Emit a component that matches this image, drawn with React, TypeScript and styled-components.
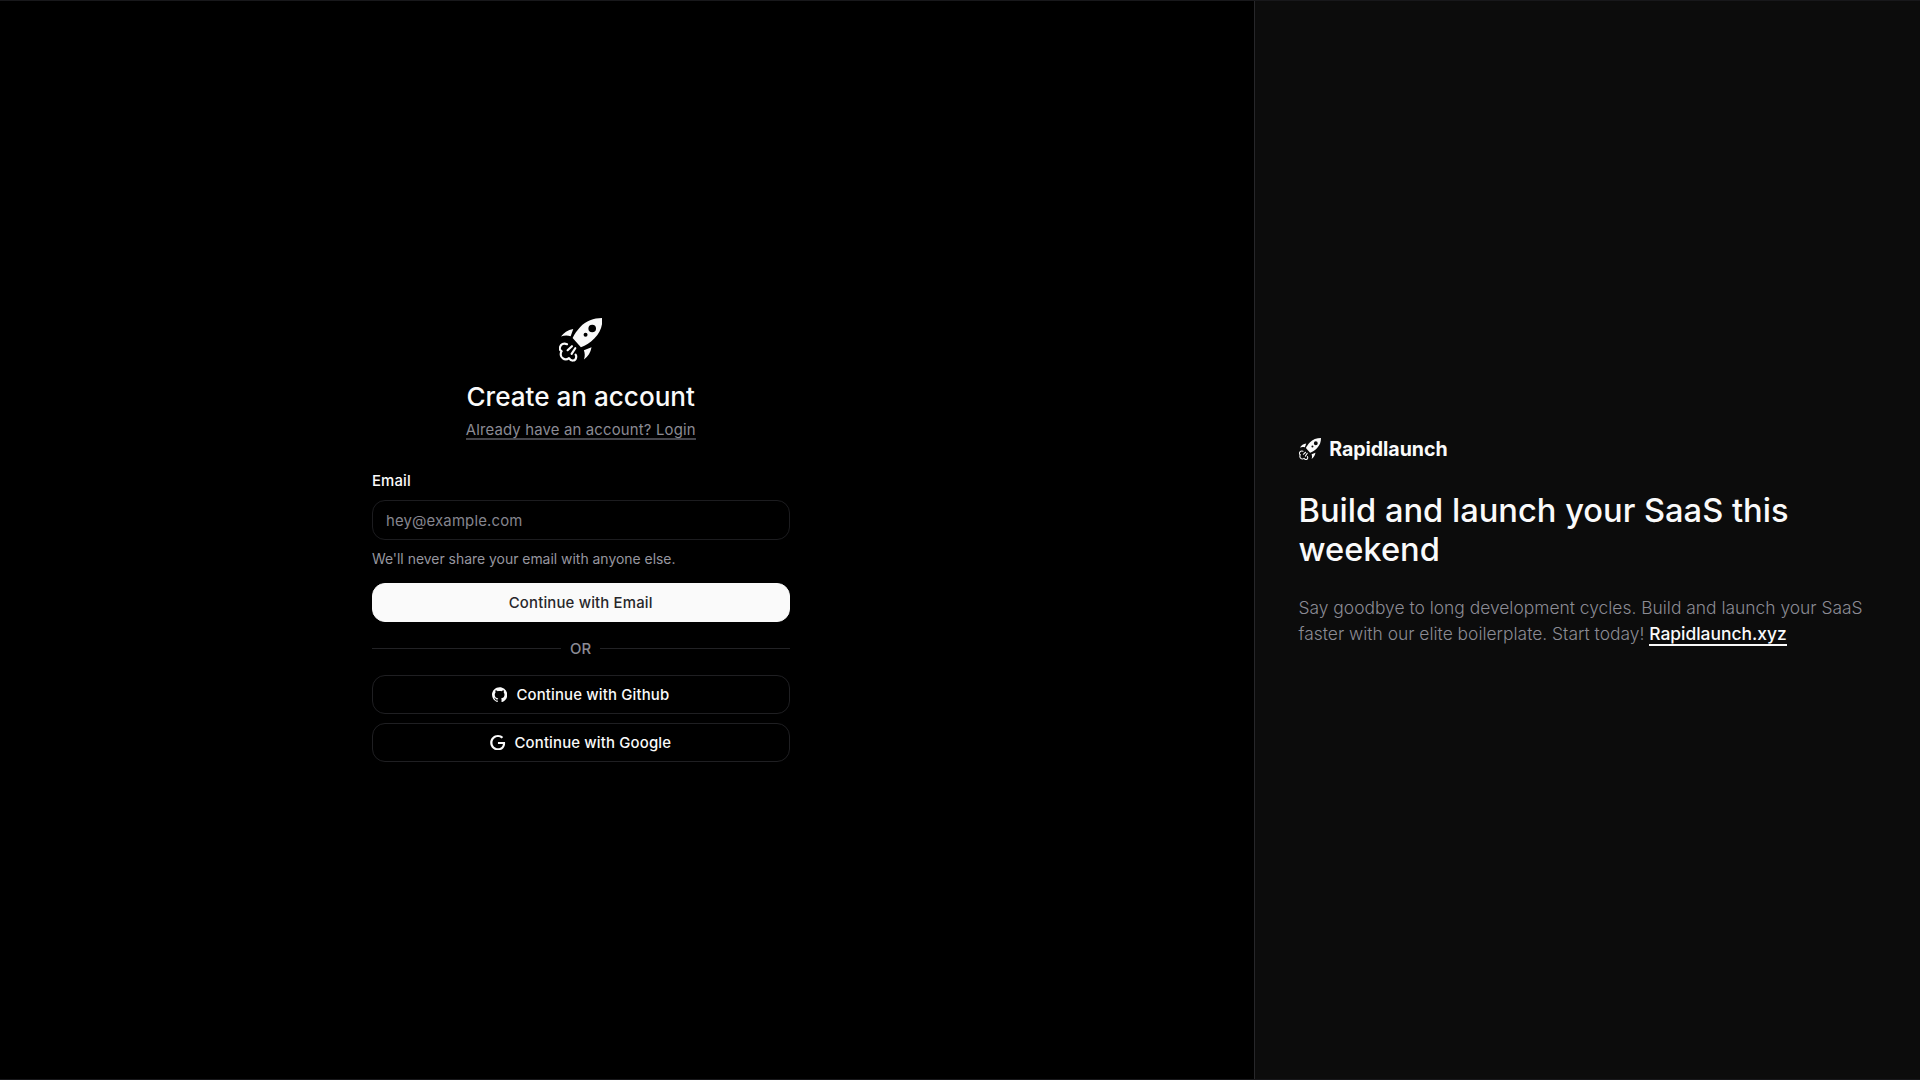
import React from "react";
import styled, { createGlobalStyle } from "styled-components";
import { SiGithub, SiGoogle } from "react-icons/si";

const GlobalStyle = createGlobalStyle`
  *, *::before, *::after { box-sizing: border-box; }
  body {
    margin: 0;
    background: #000;
    color: #fafafa;
    font-family: Inter, "Liberation Sans", sans-serif;
    font-size: 14.9px;
    letter-spacing: 0.17px;
  }
  h1, h2, p { margin: 0; }
`;

const Page = styled.main`
  display: grid;
  grid-template-columns: 1254px 1fr;
  height: 1080px;
  border-top: 1px solid #18181b;
  border-bottom: 1px solid #18181b;
`;

const FormSide = styled.section`
  display: flex;
  align-items: center;
  justify-content: center;
  padding-right: 92.6px;
`;

const FormColumn = styled.div`
  display: flex;
  flex-direction: column;
  width: 417.6px;
`;

const Header = styled.header`
  display: flex;
  flex-direction: column;
  align-items: center;
`;

const Title = styled.h1`
  margin-top: 18.4px;
  font-size: 26.1px;
  line-height: 34.8px;
  font-weight: 500;
  letter-spacing: 0;
`;

const LoginLink = styled.a`
  margin-top: 3px;
  height: 22px;
  line-height: 24px;
  color: #8b8b94;
  border-bottom: 2px solid #45454b;
`;

const Label = styled.label`
  margin-top: 33px;
  padding-top: 1px;
  line-height: 15px;
  font-weight: 500;
`;

const EmailInput = styled.input`
  margin-top: 11px;
  height: 40px;
  padding: 2px 13px 0;
  border: 1px solid #1c1c1f;
  border-radius: 13px;
  background: transparent;
  color: #fafafa;
  font: inherit;
  letter-spacing: inherit;
  outline: none;
  &::placeholder { color: #85858e; opacity: 1; }
`;

const Hint = styled.p`
  margin-top: 9px;
  font-size: 13.93px;
  line-height: 21px;
  letter-spacing: 0;
  color: #96969f;
`;

const Button = styled.button<{ $primary?: boolean }>`
  display: flex;
  align-items: center;
  justify-content: center;
  gap: 9px;
  width: 100%;
  height: 39px;
  padding: 0;
  border: 1px solid ${(p) => (p.$primary ? "#fafafa" : "#1f1f22")};
  border-radius: 13px;
  background: ${(p) => (p.$primary ? "#fafafa" : "transparent")};
  color: ${(p) => (p.$primary ? "#27272a" : "#fafafa")};
  font: inherit;
  font-weight: 500;
  letter-spacing: inherit;
`;

const Caption = styled.span`
  padding-top: 2px;
`;

const SubmitRow = styled.div`
  margin-top: 13px;
`;

const Divider = styled.div`
  display: flex;
  align-items: center;
  gap: 9px;
  margin: 16px 0;
  height: 21px;
  color: #8b8b94;
  font-weight: 500;
  &::before, &::after {
    content: "";
    flex: 1;
    height: 1px;
    background: #222225;
  }
`;

const Providers = styled.div`
  display: flex;
  flex-direction: column;
  gap: 9px;
`;

const PromoSide = styled.aside`
  display: flex;
  flex-direction: column;
  justify-content: center;
  padding: 0 43.5px;
  border-left: 1px solid #27272a;
  background: #0c0c0c;
  letter-spacing: 0;
`;

const Brand = styled.div`
  display: flex;
  align-items: center;
  gap: 8.7px;
  font-size: 19.59px;
  line-height: 30px;
  font-weight: 700;
  letter-spacing: -0.04px;
`;

const Headline = styled.h2`
  margin-top: 27px;
  font-size: 32.65px;
  line-height: 39.2px;
  font-weight: 500;
`;

const Pitch = styled.p`
  margin-top: 26px;
  margin-bottom: -1px;
  font-size: 17.41px;
  line-height: 26.1px;
  font-weight: 300;
  color: #8b8b94;
`;

const SiteLink = styled.a`
  color: #fafafa;
  font-weight: 500;
  border-bottom: 2px solid #fafafa;
`;

function Rocket({ size }: { size: number }) {
  return (
    <svg width={size} height={size} viewBox="56 53 131 131" fill="currentColor">
      <path
        fillRule="evenodd"
        d="M187 53C161 53 138 61 120 80C110 91 103 101 97 113L122 141C136 136 151 127 163 114C181 95 187 77 187 53ZM156 73a11.5 11.5 0 1 1 0 23a11.5 11.5 0 0 1 0-23ZM136 97.500a6 6 0 1 1 0 12a6 6 0 0 1 0-12Z"
      />
      <path d="M99 86C82 89 70 97 62 109C72 105 82 105 91 108Z" />
      <path d="M154 141C151 157 144 169 131 178C135 168 134 159 131 150Z" />
      <g fill="none" stroke="currentColor" strokeWidth="6.5" strokeLinecap="round" strokeLinejoin="round">
        <path d="M80 132C70 128 61 132 59 141C57 147 60 151 64 153C59 160 61 170 67 174C73 179 81 178 86 174C92 184 105 183 107 174C109 168 108 166 106 163" />
        <path d="M95 138L82 150M105 144L94 161" />
      </g>
    </svg>
  );
}

export default function App() {
  return (
    <>
      <GlobalStyle />
      <Page>
        <FormSide>
          <FormColumn>
            <Header>
              <Rocket size={43.5} />
              <Title>Create an account</Title>
              <LoginLink>Already have an account? Login</LoginLink>
            </Header>
            <Label htmlFor="email">Email</Label>
            <EmailInput id="email" type="email" placeholder="hey@example.com" />
            <Hint>We'll never share your email with anyone else.</Hint>
            <SubmitRow>
              <Button $primary><Caption>Continue with Email</Caption></Button>
            </SubmitRow>
            <Divider><Caption>OR</Caption></Divider>
            <Providers>
              <Button><SiGithub size={15.3} /><Caption>Continue with Github</Caption></Button>
              <Button><SiGoogle size={15.3} /><Caption>Continue with Google</Caption></Button>
            </Providers>
          </FormColumn>
        </FormSide>
        <PromoSide>
          <Brand><Rocket size={22} />Rapidlaunch</Brand>
          <Headline>Build and launch your SaaS this weekend</Headline>
          <Pitch>
            Say goodbye to long development cycles. Build and launch your SaaS
            faster with our elite boilerplate. Start today! <SiteLink>Rapidlaunch.xyz</SiteLink>
          </Pitch>
        </PromoSide>
      </Page>
    </>
  );
}
